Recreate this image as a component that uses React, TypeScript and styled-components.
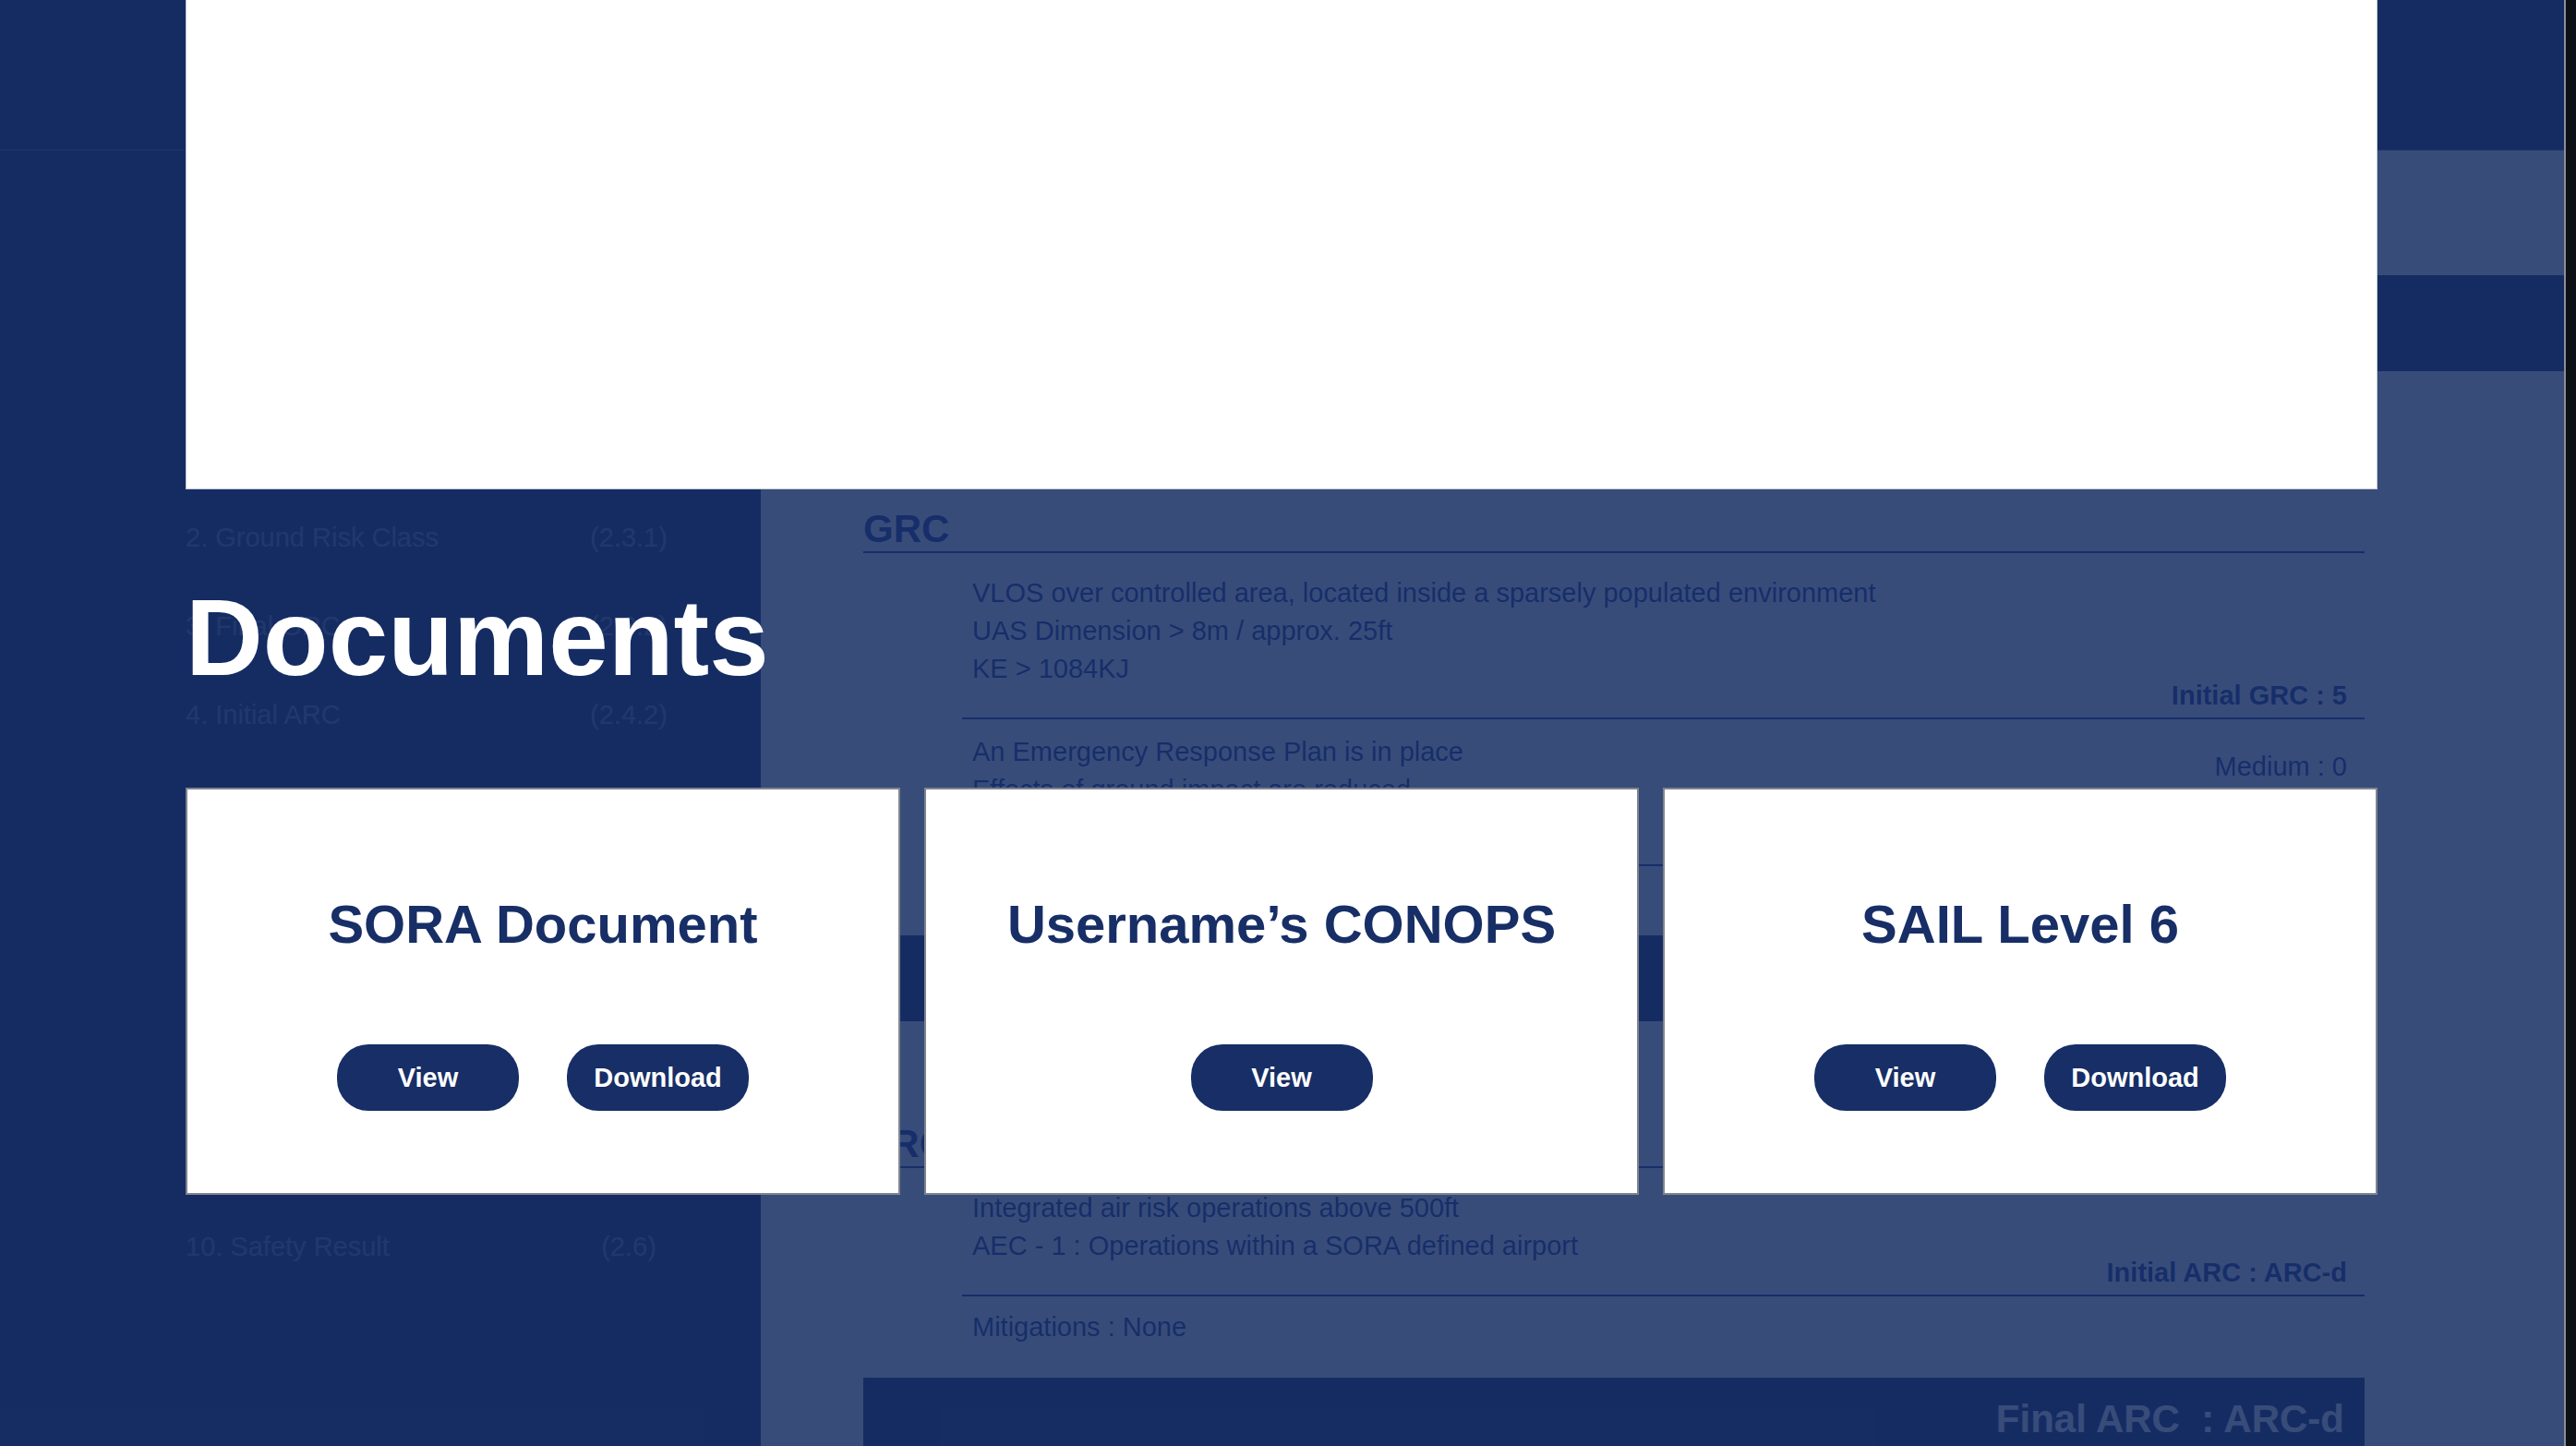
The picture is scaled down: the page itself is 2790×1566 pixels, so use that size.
import styled, { createGlobalStyle } from "styled-components";

const NAVY = "#152d63";
const INK = "#1e3a8a";
const BRAND = "#172e66";
const FONT = `"Liberation Sans", Arial, Helvetica, sans-serif`;

const steps: [string, string][] = [
  ["1. ConOps Description", "(2.1)"],
  ["2. Ground Risk Class", "(2.3.1)"],
  ["3. Final GRC", "(2.3.2)"],
  ["4. Initial ARC", "(2.4.2)"],
  ["5. Strategic Mitigation", "(2.4.3)"],
  ["6. TMPR", "(2.4.4)"],
  ["7. SAIL", "(2.5.1)"],
  ["8. OSO", "(2.5.2)"],
  ["9. Adjacent Area", "(2.5.3)"],
  ["10. Safety Result", "(2.6)"],
];

const documents = [
  { title: "SORA Document", download: true },
  { title: "Username\u2019s CONOPS", download: false },
  { title: "SAIL Level 6", download: true },
];

const App = () => {
  return (
    <>
      <GlobalStyle />
      <Screen>
        <Page>
          <Header />
          <Body>
            <Sidebar>
              {steps.map(([label, ref]) => (
                <Step key={label}>
                  <span>{label}</span>
                  <StepRef>{ref}</StepRef>
                </Step>
              ))}
            </Sidebar>

            <Content>
              <SubBar />
              <TabBar />

              <Section>
                <SectionTitle $gap={147}>GRC</SectionTitle>
                <Row $pt={23} $pb={15} $line>
                  <Lines>
                    <div>VLOS over controlled area, located inside a sparsely populated environment</div>
                    <div>UAS Dimension &gt; 8m / approx. 25ft</div>
                    <div>KE &gt; 1084KJ</div>
                  </Lines>
                  <Total>Initial GRC : 5</Total>
                </Row>
                <Row $pt={15} $pb={60} $line $split>
                  <Lines>
                    <div>An Emergency Response Plan is in place</div>
                    <div>Effects of ground impact are reduced</div>
                  </Lines>
                  <Side>Medium : 0</Side>
                </Row>
                <FinalBar $gap={75}>Final GRC  : 5</FinalBar>

                <SectionTitle $gap={109}>ARC</SectionTitle>
                <Row $pt={23} $pb={15} $line>
                  <Lines>
                    <div>Integrated air risk operations above 500ft</div>
                    <div>AEC - 1 : Operations within a SORA defined airport</div>
                  </Lines>
                  <Total>Initial ARC : ARC-d</Total>
                </Row>
                <Row $pt={13} $pb={34}>
                  <Lines>
                    <div>Mitigations : None</div>
                  </Lines>
                </Row>
                <FinalBar $gap={0}>Final ARC  : ARC-d</FinalBar>
              </Section>
            </Content>
          </Body>

          <Overlay>
            <Modal>
              <Preview />
              <ModalTitle>Documents</ModalTitle>
              <Cards>
                {documents.map((doc) => (
                  <Card key={doc.title}>
                    <CardTitle>{doc.title}</CardTitle>
                    <Actions>
                      <ActionButton>View</ActionButton>
                      {doc.download && <ActionButton>Download</ActionButton>}
                    </Actions>
                  </Card>
                ))}
              </Cards>
            </Modal>
          </Overlay>
        </Page>
        <ScrollTrack />
      </Screen>
    </>
  );
};

const GlobalStyle = createGlobalStyle`
  html, body {
    margin: 0;
    padding: 0;
    overflow: hidden;
    background: ${NAVY};
    font-family: ${FONT};
  }

  * {
    box-sizing: border-box;
  }
`;

const Screen = styled.div`
  display: flex;
  width: 2790px;
  height: 1566px;
  overflow: hidden;
`;

const Page = styled.div`
  position: relative;
  flex: 1;
  display: flex;
  flex-direction: column;
  overflow: hidden;
  background: #ffffff;
`;

const Header = styled.header`
  flex: none;
  height: 163px;
  background: ${NAVY};
  border-bottom: 1px solid rgba(255, 255, 255, 0.3);
`;

const Body = styled.div`
  flex: 1;
  display: flex;
`;

const Sidebar = styled.nav`
  flex: none;
  width: 824px;
  padding: 275px 0 0 201px;
  background: ${NAVY};
`;

const Step = styled.div`
  display: grid;
  grid-template-columns: 400px 160px;
  height: 96px;
  font-size: 29px;
  line-height: 96px;
  color: #6d7aa1;
  white-space: nowrap;
`;

const StepRef = styled.span`
  text-align: center;
`;

const Content = styled.main`
  flex: 1;
  display: flex;
  flex-direction: column;
`;

const SubBar = styled.div`
  height: 135px;
`;

const TabBar = styled.div`
  height: 104px;
  background: ${NAVY};
`;

const Section = styled.section`
  width: 1626px;
  margin-left: 111px;
  color: ${INK};
`;

const SectionTitle = styled.h2<{ $gap: number }>`
  margin: ${(p) => p.$gap}px 0 0;
  font-size: 42px;
  line-height: 48px;
  font-weight: 700;
  border-bottom: 2px solid ${INK};
`;

const Row = styled.div<{ $pt: number; $pb: number; $line?: boolean; $split?: boolean }>`
  display: flex;
  flex-direction: ${(p) => (p.$split ? "row" : "column")};
  justify-content: space-between;
  margin-left: 107px;
  padding: ${(p) => p.$pt}px 19px ${(p) => p.$pb}px 11px;
  border-bottom: ${(p) => (p.$line ? `2px solid ${INK}` : "none")};
`;

const Lines = styled.div`
  font-size: 29px;
  line-height: 41px;
`;

const Total = styled.div`
  font-size: 29px;
  line-height: 17px;
  font-weight: 700;
  text-align: right;
`;

const Side = styled.div`
  margin-top: 16px;
  font-size: 29px;
  line-height: 41px;
`;

const FinalBar = styled.div<{ $gap: number }>`
  margin-top: ${(p) => p.$gap}px;
  height: 93px;
  padding-right: 22px;
  background: ${NAVY};
  color: #ffffff;
  font-size: 42px;
  line-height: 89px;
  font-weight: 700;
  text-align: right;
  white-space: pre;
`;

const Overlay = styled.div`
  position: absolute;
  inset: 0;
  background: rgba(21, 45, 99, 0.852);
`;

const Modal = styled.div`
  width: 2374px;
  margin-left: 201px;
  display: flex;
  flex-direction: column;
`;

const Preview = styled.div`
  height: 530px;
  background: #ffffff;
  border: 1px solid #c5cad3;
  border-top: none;
`;

const ModalTitle = styled.h1`
  margin: 104px 0;
  font-size: 116px;
  line-height: 115px;
  font-weight: 700;
  color: #ffffff;
`;

const Cards = styled.div`
  display: grid;
  grid-template-columns: repeat(3, 1fr);
  gap: 26px;
`;

const Card = styled.div`
  height: 441px;
  display: flex;
  flex-direction: column;
  align-items: center;
  padding-top: 113px;
  background: #ffffff;
  border: 2px solid #80858d;
`;

const CardTitle = styled.h3`
  margin: 0;
  font-size: 58px;
  line-height: 66px;
  font-weight: 700;
  color: ${BRAND};
  white-space: nowrap;
`;

const Actions = styled.div`
  display: flex;
  gap: 52px;
  margin-top: 97px;
`;

const ActionButton = styled.button`
  width: 197px;
  height: 72px;
  padding: 0;
  border: none;
  border-radius: 34px;
  background: ${BRAND};
  color: #ffffff;
  font-family: ${FONT};
  font-size: 29px;
  font-weight: 700;
  cursor: pointer;
`;

const ScrollTrack = styled.div`
  flex: none;
  width: 13px;
  background: #0d1115;
  border-left: 2px solid #8a8f97;
`;

export default App;
